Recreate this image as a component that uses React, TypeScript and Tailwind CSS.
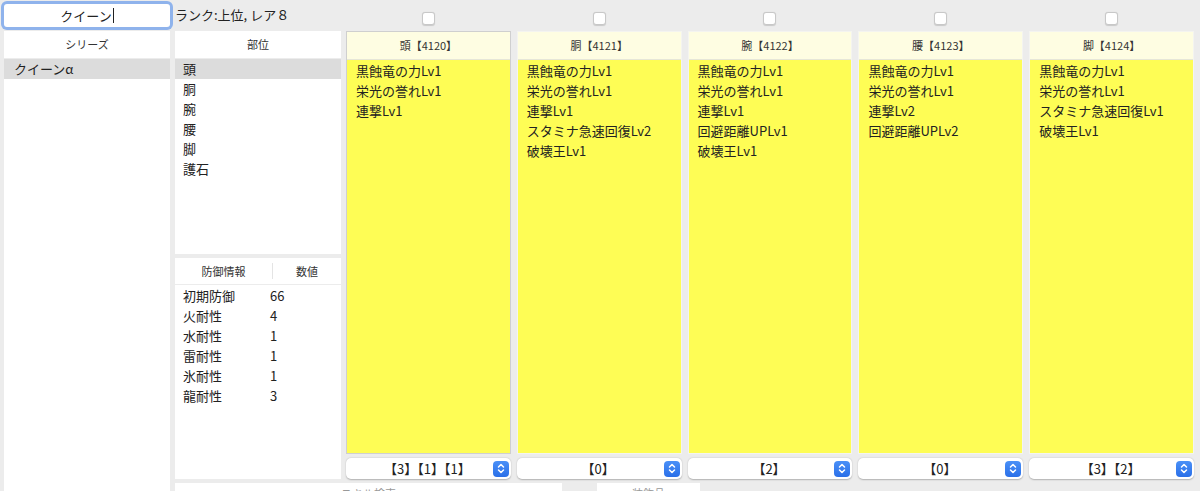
import React from "react";

const font = { fontFamily: '"Noto Sans CJK JP", "Noto Sans", sans-serif' };

interface Part {
  title: string;
  skills: string[];
  slots: string;
  selected?: boolean;
}

const parts: Part[] = [
  { title: "頭【4120】", skills: ["黒蝕竜の力Lv1", "栄光の誉れLv1", "連撃Lv1"], slots: "【3】【1】【1】", selected: true },
  { title: "胴【4121】", skills: ["黒蝕竜の力Lv1", "栄光の誉れLv1", "連撃Lv1", "スタミナ急速回復Lv2", "破壊王Lv1"], slots: "【0】" },
  { title: "腕【4122】", skills: ["黒蝕竜の力Lv1", "栄光の誉れLv1", "連撃Lv1", "回避距離UPLv1", "破壊王Lv1"], slots: "【2】" },
  { title: "腰【4123】", skills: ["黒蝕竜の力Lv1", "栄光の誉れLv1", "連撃Lv2", "回避距離UPLv2"], slots: "【0】" },
  { title: "脚【4124】", skills: ["黒蝕竜の力Lv1", "栄光の誉れLv1", "スタミナ急速回復Lv1", "破壊王Lv1"], slots: "【3】【2】" },
];

const bui = ["頭", "胴", "腕", "腰", "脚", "護石"];

const defense: [string, string][] = [
  ["初期防御", "66"],
  ["火耐性", "4"],
  ["水耐性", "1"],
  ["雷耐性", "1"],
  ["氷耐性", "1"],
  ["龍耐性", "3"],
];

function Checkbox() {
  return <div className="w-[13px] h-[13px] rounded-[3px] bg-white border border-[#c8c8c8] shadow-[0_0.5px_1px_rgba(0,0,0,0.15)]" />;
}

function Stepper() {
  return (
    <div className="w-[16px] h-[16px] rounded-[4px] bg-gradient-to-b from-[#4a90f7] to-[#2a6fe8] flex items-center justify-center">
      <svg width="8" height="11" viewBox="0 0 8 11" fill="none" stroke="white" strokeWidth="1.5" strokeLinecap="round" strokeLinejoin="round">
        <path d="M1.5 4 L4 1.5 L6.5 4" />
        <path d="M1.5 7 L4 9.5 L6.5 7" />
      </svg>
    </div>
  );
}

function PartColumn({ part }: { part: Part }) {
  return (
    <div className="flex flex-col min-w-0">
      <div className={`flex-1 flex flex-col border ${part.selected ? "border-[#cfcfcf]" : "border-[#f4f4f0]"}`}>
        <div className="h-[28px] shrink-0 bg-[#fefde2] border-b border-[#e6e6d8] flex items-center justify-center text-[11px] text-[#333]">
          {part.title}
        </div>
        <div className="flex-1 bg-[#fefd55] pt-[1px] pl-[9px]">
          {part.skills.map((s) => (
            <div key={s} className="h-[20px] leading-[20px] text-[13px] text-[#222]">
              {s}
            </div>
          ))}
        </div>
      </div>
      <div className="mt-[4px] h-[21px] shrink-0 bg-white rounded-[5px] shadow-[0_0.5px_1.5px_rgba(0,0,0,0.25)] flex items-center pl-[2px] pr-[2px]">
        <div className="flex-1 text-center text-[13px] text-[#222] pl-[14px]">{part.slots}</div>
        <Stepper />
      </div>
    </div>
  );
}

export default function App() {
  return (
    <div className="w-[1200px] h-[491px] overflow-hidden bg-[#ececec] flex gap-[5px] pl-[4px] pr-[6px]" style={font}>
      {/* left: search + series */}
      <div className="w-[166px] shrink-0 flex flex-col">
        <div className="mt-[4px] h-[23px] bg-white rounded-[3px] ring-[3px] ring-[#8fb3ec] flex items-center justify-center text-[13px] text-[#222]">
          <span>クイーン</span>
          <span className="inline-block w-[1px] h-[15px] bg-[#222] ml-[1px]" />
        </div>
        <div className="mt-[4px] flex-1 bg-white">
          <div className="h-[28px] border-b border-[#ececec] flex items-center justify-center text-[11px] text-[#333]">シリーズ</div>
          <div className="h-[20px] bg-[#dcdcdc] pl-[10px] leading-[20px] text-[13px] text-[#222]">クイーンα</div>
        </div>
      </div>

      {/* right area */}
      <div className="flex-1 flex flex-col min-w-0">
        <div className="h-[31px] shrink-0 flex">
          <div className="w-[166px] shrink-0 flex items-center text-[13px] text-[#222] pb-[1px]">ランク:上位, レア８</div>
          <div className="flex-1 ml-[5px] grid grid-cols-5 gap-[6px]">
            {parts.map((p) => (
              <div key={p.title} className="flex items-center justify-center pt-[6px]">
                <Checkbox />
              </div>
            ))}
          </div>
        </div>

        <div className="h-[448px] shrink-0 flex gap-[5px]">
          <div className="w-[166px] shrink-0 flex flex-col gap-[4px]">
            <div className="h-[223px] shrink-0 bg-white">
              <div className="h-[28px] border-b border-[#ececec] flex items-center justify-center text-[11px] text-[#333]">部位</div>
              {bui.map((b, i) => (
                <div key={b} className={`h-[20px] leading-[20px] pl-[8px] text-[13px] text-[#222] ${i === 0 ? "bg-[#dcdcdc]" : ""}`}>
                  {b}
                </div>
              ))}
            </div>
            <div className="flex-1 bg-white">
              <div className="h-[27px] border-b border-[#ececec] flex items-center text-[11px] text-[#333]">
                <div className="w-[97px] text-center">防御情報</div>
                <div className="w-[1px] h-[16px] bg-[#e4e4e4]" />
                <div className="flex-1 text-center">数値</div>
              </div>
              <div className="pt-[1px]">
                {defense.map(([k, v]) => (
                  <div key={k} className="h-[20px] leading-[20px] flex text-[13px] text-[#222]">
                    <div className="w-[95px] pl-[8px]">{k}</div>
                    <div>{v}</div>
                  </div>
                ))}
              </div>
            </div>
          </div>
          <div className="flex-1 grid grid-cols-5 gap-[6px]">
            {parts.map((p) => (
              <PartColumn key={p.title} part={p} />
            ))}
          </div>
        </div>

        <div className="mt-[4px] flex gap-[35px]">
          <div className="w-[387px] h-[24px] bg-white text-center text-[11px] text-[#999] pt-[2px]">スキル検索</div>
          <div className="w-[103px] h-[24px] bg-white text-center text-[11px] text-[#999] pt-[2px]">装飾品</div>
        </div>
      </div>
    </div>
  );
}
